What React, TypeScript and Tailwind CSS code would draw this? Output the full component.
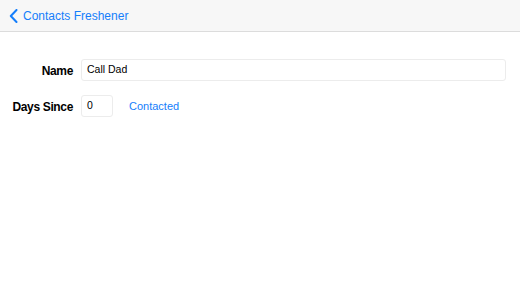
import React from "react";

export default function App() {
  return (
    <div className="w-[520px] h-[293px] bg-white overflow-hidden" style={{ fontFamily: '"Liberation Sans", Arial, sans-serif' }}>
      <div className="h-[32px] bg-[#f7f7f7] border-b border-[#dcdcdc] flex items-center pl-[9px] pt-[1px]">
        <svg width="9" height="14" viewBox="0 0 9 14" className="mr-[5px]">
          <path d="M7.5 1 L1.8 7 L7.5 13" fill="none" stroke="#157efb" strokeWidth="2" strokeLinecap="round" strokeLinejoin="round" />
        </svg>
        <span className="text-[12px] text-[#157efb] leading-none">Contacts Freshener</span>
      </div>
      <div className="pt-[27px] pr-[14px] flex flex-col gap-[14px]">
        <div className="flex items-center">
          <div className="w-[73px] text-right text-[12px] tracking-[-0.35px] font-bold text-black pt-[2px]">Name</div>
          <div className="ml-[8px] flex-1 h-[22px] border border-[#ececec] rounded-[3px] flex items-center pl-[5px] text-[10.5px] text-black">Call Dad</div>
        </div>
        <div className="flex items-center">
          <div className="w-[73px] text-right text-[12px] tracking-[-0.35px] font-bold text-black pt-[2px]">Days Since</div>
          <div className="ml-[8px] w-[32px] h-[22px] border border-[#ececec] rounded-[3px] flex items-center pl-[5px] text-[10.5px] text-black">0</div>
          <div className="ml-[16px] text-[11px] text-[#157efb] pt-[1px]">Contacted</div>
        </div>
      </div>
    </div>
  );
}
